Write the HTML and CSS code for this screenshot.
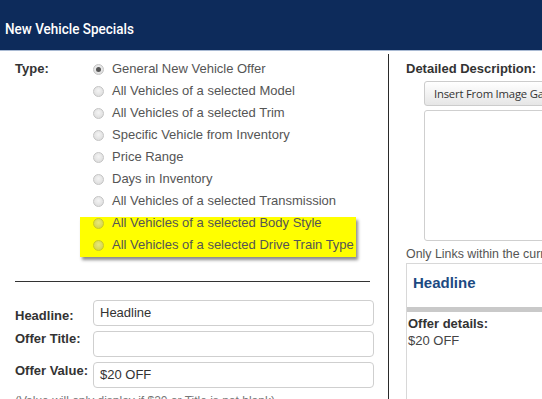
FILE: index.html
```html
<!DOCTYPE html>
<html>
<head>
<meta charset="utf-8">
<link rel="stylesheet" href="styles.css">
</head>
<body>
<div class="header"><h1 class="title">New Vehicle Specials</h1></div>
<div class="main">
  <div class="left">
    <div class="type-row">
      <div class="type-label">Type:</div>
      <div class="options">
        <div class="opt"><span class="radio checked"></span>General New Vehicle Offer</div>
        <div class="opt"><span class="radio"></span>All Vehicles of a selected Model</div>
        <div class="opt"><span class="radio"></span>All Vehicles of a selected Trim</div>
        <div class="opt"><span class="radio"></span>Specific Vehicle from Inventory</div>
        <div class="opt"><span class="radio"></span>Price Range</div>
        <div class="opt"><span class="radio"></span>Days in Inventory</div>
        <div class="opt"><span class="radio"></span>All Vehicles of a selected Transmission</div>
        <div class="highlight">
          <div class="opt"><span class="radio hl"></span>All Vehicles of a selected Body Style</div>
          <div class="opt"><span class="radio hl"></span>All Vehicles of a selected Drive Train Type</div>
        </div>
      </div>
    </div>
    <div class="rule"></div>
    <div class="field field-first">
      <div class="flabel">Headline:</div>
      <div class="input">Headline</div>
    </div>
    <div class="field">
      <div class="flabel">Offer Title:</div>
      <div class="input"></div>
    </div>
    <div class="field field-last">
      <div class="flabel">Offer Value:</div>
      <div class="input">$20 OFF</div>
    </div>
    <div class="note">(Value will only display if $20 or Title is not blank)</div>
  </div>
  <div class="right">
    <div class="dlabel">Detailed Description:</div>
    <div class="btn">Insert From Image Gallery</div>
    <div class="textarea"></div>
    <div class="links">Only Links within the current site are allowed</div>
    <div class="preview">
      <div class="pv-head">Headline</div>
      <div class="pv-bar"></div>
      <div class="pv-label">Offer details:</div>
      <div class="pv-value">$20 OFF</div>
    </div>
  </div>
</div>
</body>
</html>
```

FILE: styles.css
```css
html, body {
  margin: 0;
  padding: 0;
  background: #fff;
  overflow: hidden;
  width: 542px;
  height: 399px;
}
body {
  font-family: "Liberation Sans", Arial, sans-serif;
  font-size: 13px;
  color: #555;
}
.header {
  height: 50px;
  background: #0d2b5b;
  border-bottom: 1px solid #a9bad3;
  display: flex;
  align-items: center;
}
.title {
  margin: 0 0 0 5px;
  padding-top: 7px;
  font-family: "Roboto", sans-serif;
  font-weight: 500;
  font-size: 15.5px;
  color: #fff;
  transform: scaleX(0.87);
  transform-origin: left center;
  white-space: nowrap;
}
.main {
  display: flex;
  width: 800px;
}
.left {
  width: 389px;
  flex: none;
  border-right: 1px solid #2a2a2a;
  margin-top: 3px;
  padding-top: 4px;
  height: 400px;
  box-sizing: border-box;
}
.type-row {
  display: flex;
}
.type-label {
  width: 77px;
  padding-left: 15px;
  font-weight: bold;
  color: #333;
  line-height: 22px;
}
.options {
  display: flex;
  flex-direction: column;
}
.opt {
  height: 22px;
  line-height: 22px;
  display: flex;
  align-items: center;
  white-space: nowrap;
}
.radio {
  width: 9px;
  height: 9px;
  border-radius: 50%;
  border: 1px solid #c4c4c4;
  background: radial-gradient(circle at 50% 40%, #f4f4f4, #d8d8d8);
  margin: 0 8px 0 1px;
  position: relative;
  flex: none;
}
.radio.checked::after {
  content: "";
  position: absolute;
  left: 2px;
  top: 2px;
  width: 5px;
  height: 5px;
  border-radius: 50%;
  background: #555;
}
.radio.hl {
  border-color: #c8c828;
  background: radial-gradient(circle at 50% 40%, #e8e87a, #cfcf40);
}
.highlight {
  margin-left: -12px;
  padding-left: 12px;
  width: 264px;
  margin-top: 5px;
  height: 40px;
  background: #ffff00;
  box-shadow: 2px 3px 3px rgba(0,0,0,0.45);
}
.highlight .opt:first-child {
  margin-top: -5px;
}
.rule {
  margin: 24px 0 0 15px;
  width: 355px;
  border-top: 1px solid #333;
}
.field {
  display: flex;
  margin-top: 5px;
}
.field-first {
  margin-top: 18px;
}
.flabel {
  width: 78px;
  padding-left: 15px;
  font-weight: bold;
  color: #333;
  padding-top: 0;
  line-height: 16px;
}
.field-first .flabel {
  padding-top: 8px;
}
.field-last .flabel {
  padding-top: 1px;
}
.input {
  width: 281px;
  height: 26px;
  box-sizing: border-box;
  border: 1px solid #cfcfcf;
  border-radius: 4px;
  padding: 0 6px;
  line-height: 24px;
  color: #333;
}
.note {
  margin: 6px 0 0 15px;
  color: #777;
  font-size: 12px;
  line-height: 14px;
  white-space: nowrap;
}
.right {
  padding-left: 17px;
  width: 300px;
}
.dlabel {
  margin-top: 10px;
  font-weight: bold;
  color: #333;
  line-height: 16px;
}
.btn {
  margin: 4px 0 0 18px;
  height: 25px;
  box-sizing: border-box;
  border: 1px solid #cccccc;
  border-radius: 3px;
  background: linear-gradient(#ffffff, #e6e6e6);
  font-family: "Open Sans", sans-serif;
  font-size: 11.3px;
  letter-spacing: -0.2px;
  color: #333;
  line-height: 23px;
  padding-left: 9px;
  white-space: nowrap;
}
.textarea {
  margin: 4px 0 0 18px;
  height: 129px;
  border: 1px solid #cfcfcf;
  border-radius: 3px;
}
.links {
  margin-top: 5px;
  line-height: 16px;
  font-size: 12.4px;
  color: #555;
  white-space: nowrap;
}
.preview {
  margin-top: 1px;
  border: 1px solid #d8d8d8;
  height: 200px;
}
.pv-head {
  padding: 10px 0 0 6px;
  font-weight: bold;
  font-size: 15px;
  line-height: 17px;
  color: #1c4a82;
  height: 43px;
  box-sizing: border-box;
}
.pv-bar {
  height: 5px;
  background: #c9c9c9;
}
.pv-label {
  margin-top: 4px;
  padding-left: 1px;
  font-weight: bold;
  color: #333;
  line-height: 16px;
}
.pv-value {
  padding-left: 1px;
  margin-top: 1px;
  line-height: 16px;
  color: #444;
}
```
